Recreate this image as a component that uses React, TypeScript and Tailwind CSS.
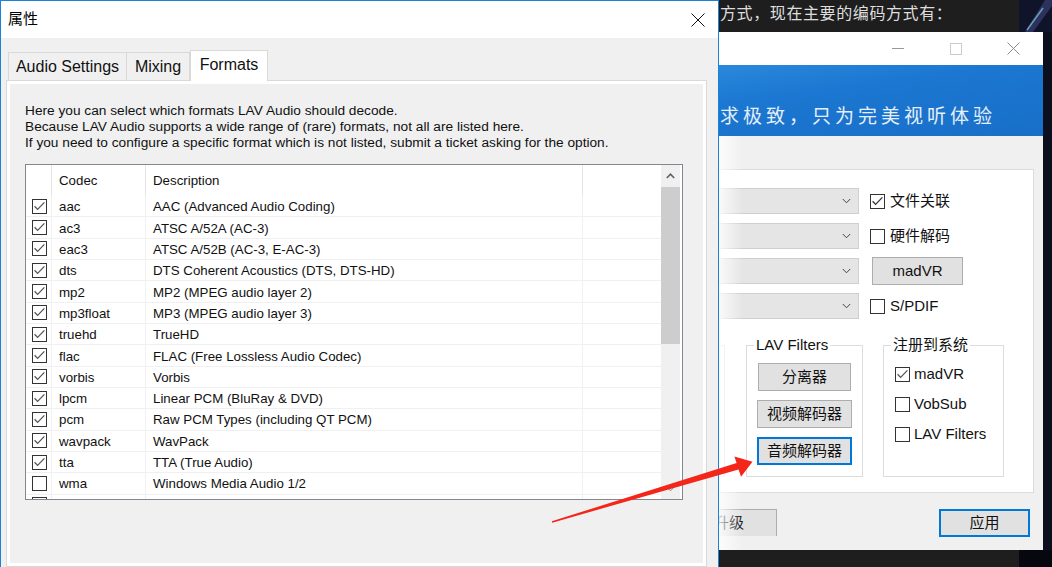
const formats: { codec: string; desc: string; on: boolean }[] = [
  { codec: 'aac', desc: 'AAC (Advanced Audio Coding)', on: true },
  { codec: 'ac3', desc: 'ATSC A/52A (AC-3)', on: true },
  { codec: 'eac3', desc: 'ATSC A/52B (AC-3, E-AC-3)', on: true },
  { codec: 'dts', desc: 'DTS Coherent Acoustics (DTS, DTS-HD)', on: true },
  { codec: 'mp2', desc: 'MP2 (MPEG audio layer 2)', on: true },
  { codec: 'mp3float', desc: 'MP3 (MPEG audio layer 3)', on: true },
  { codec: 'truehd', desc: 'TrueHD', on: true },
  { codec: 'flac', desc: 'FLAC (Free Lossless Audio Codec)', on: true },
  { codec: 'vorbis', desc: 'Vorbis', on: true },
  { codec: 'lpcm', desc: 'Linear PCM (BluRay & DVD)', on: true },
  { codec: 'pcm', desc: 'Raw PCM Types (including QT PCM)', on: true },
  { codec: 'wavpack', desc: 'WavPack', on: true },
  { codec: 'tta', desc: 'TTA (True Audio)', on: true },
  { codec: 'wma', desc: 'Windows Media Audio 1/2', on: false },
  // next row is scrolled out of view, only its checkbox edge shows
  { codec: '', desc: '', on: false },
]

function CheckBox({ on, stroke = '#555' }: { on: boolean; stroke?: string }) {
  return (
    <span className="flex h-[15px] w-[15px] shrink-0 items-center justify-center border border-[#333] bg-white">
      {on && (
        <svg width="13" height="13" viewBox="0 0 13 13">
          <polyline points="1.6,6.2 4.6,9.4 11.4,2.4" fill="none" stroke={stroke} strokeWidth="1.3" />
        </svg>
      )}
    </span>
  )
}

function Chevron({ up }: { up?: boolean }) {
  return (
    <svg width="9" height="6" viewBox="0 0 9 6">
      <polyline
        points={up ? '0.8,5 4.5,1.2 8.2,5' : '0.8,1 4.5,4.8 8.2,1'}
        fill="none"
        stroke={up ? '#606060' : '#444'}
        strokeWidth={up ? 1.6 : 1}
      />
    </svg>
  )
}

function FormatsPage() {
  return (
    <div className="h-full bg-[#f0f0f0] pl-[15px] pt-[19px]">
      {/* Intro */}
      <div className="text-[13.7px] leading-[16px] text-[#111]">
        <div>Here you can select which formats LAV Audio should decode.</div>
        <div>Because LAV Audio supports a wide range of (rare) formats, not all are listed here.</div>
        <div>If you need to configure a specific format which is not listed, submit a ticket asking for the option.</div>
      </div>

      {/* List view */}
      <div className="mt-[13px] flex h-[336px] w-[658px] border border-[#828790] bg-white text-[13.3px] text-[#111]">
        <div className="flex w-[635px] flex-col overflow-hidden">
          <div className="flex h-[31px] shrink-0">
            <div className="w-[26px] border-r border-[#e5e5e5]" />
            <div className="flex w-[94px] items-center border-r border-[#e5e5e5] pl-[7px] pt-px">Codec</div>
            <div className="flex w-[437px] items-center border-r border-[#e5e5e5] pl-[7px] pt-px">Description</div>
            <div className="w-[78px]" />
          </div>
          {formats.map((f, i) => (
            <div key={i} className="flex h-[21.33px] shrink-0 border-b border-[#f0f0f0]">
              <div className="flex w-[26px] items-center border-r border-[#f0f0f0] pl-[6px]">
                <CheckBox on={f.on} />
              </div>
              <div className="flex w-[94px] items-center border-r border-[#f0f0f0] pl-[7px] pt-[2px]">{f.codec}</div>
              <div className="flex w-[437px] items-center border-r border-[#f0f0f0] pl-[7px] pt-[2px]">{f.desc}</div>
              <div className="w-[78px]" />
            </div>
          ))}
        </div>

        {/* Scrollbar */}
        <div className="flex w-[19px] flex-col bg-[#f0f0f0]">
          <div className="flex h-[22px] items-center justify-center">
            <Chevron up />
          </div>
          <div className="h-[157px] bg-[#cdcdcd]" />
          <div className="flex-1" />
          <div className="flex h-[21px] items-center justify-center opacity-60">
            <Chevron />
          </div>
        </div>
        <div className="w-[2px] bg-white" />
      </div>
    </div>
  )
}

function PropertiesDialog() {
  return (
    <div className="relative z-10 flex h-full w-[719px] shrink-0 flex-col border-x border-t border-[#1883d7] bg-[#f0f0f0]">
      {/* Title bar */}
      <div className="flex h-[37px] items-center justify-between bg-white pl-[7px] pr-[13px]">
        <span className="text-[15px] text-black">属性</span>
        <svg width="14" height="14" viewBox="0 0 14 14">
          <path d="M0.5 0.5 L13.5 13.5 M13.5 0.5 L0.5 13.5" stroke="#111" strokeWidth="1" />
        </svg>
      </div>

      <div className="flex flex-1 flex-col pt-[12px]">
        {/* Tabs */}
        <div className="relative z-10 -mb-px flex items-end pl-[7px] text-[16px] text-[#111]">
          <div className="mb-px flex h-[28px] w-[119px] items-center justify-center border-x border-t border-[#d9d9d9]">
            Audio Settings
          </div>
          <div className="mb-px flex h-[28px] w-[63px] items-center justify-center border-r border-t border-[#d9d9d9]">
            Mixing
          </div>
          <div className="flex h-[31px] w-[78px] items-center justify-center border-x border-t border-[#d9d9d9] bg-white pb-[3px]">
            Formats
          </div>
        </div>

        {/* Tab page */}
        <div className="ml-[5px] w-[701px] flex-1 border border-[#d9d9d9] bg-white p-[3px]">
          <FormatsPage />
        </div>
      </div>
    </div>
  )
}

function WinButton({ children, className = '' }: { children: React.ReactNode; className?: string }) {
  return (
    <div className={`flex h-[28px] items-center justify-center bg-[#e1e1e1] text-[15px] text-[#111] ${className}`}>
      {children}
    </div>
  )
}

function PlayerWindow() {
  return (
    <div className="flex w-[324px] flex-col bg-[#f0f0f0]">
      {/* Caption */}
      <div className="flex h-[33px] justify-end bg-white">
        <div className="flex w-[58px] items-center justify-center">
          <div className="h-px w-[12px] bg-[#999]" />
        </div>
        <div className="flex w-[58px] items-center justify-center">
          <div className="h-[12px] w-[12px] border border-[#ccc]" />
        </div>
        <div className="flex w-[58px] items-center justify-center pr-[2px]">
          <svg width="13" height="13" viewBox="0 0 13 13">
            <path d="M0.5 0.5 L12.5 12.5 M12.5 0.5 L0.5 12.5" stroke="#8a8a8a" strokeWidth="1" />
          </svg>
        </div>
      </div>

      {/* Banner */}
      <div className="h-[71px] bg-[linear-gradient(172deg,#2a88dc_0%,#1b77d1_35%,#186fc8_100%)] pl-px pt-[38px]">
        <span className="text-[19px] leading-[28px] tracking-[4px] text-[#e6eff9]">求极致，只为完美视听体验</span>
      </div>

      {/* Body */}
      <div className="relative flex flex-1 flex-col pt-[33px]">
        <div className="mr-[9px] h-[324px] border-y border-r border-[#dcdcdc] bg-white text-[15px] text-[#111]">
          <div className="flex flex-col gap-[9px] pt-[18px]">
            {[
              { kind: 'check', label: '文件关联', on: true },
              { kind: 'check', label: '硬件解码', on: false },
              { kind: 'button', label: 'madVR', on: false },
              { kind: 'check', label: 'S/PDIF', on: false },
            ].map(r => (
              <div key={r.label} className="flex h-[26px] items-center">
                <div className="flex h-[26px] w-[140px] items-center justify-end border-y border-r border-[#cfcfcf] bg-[#e5e5e5] pr-[7px]">
                  <Chevron />
                </div>
                {r.kind === 'check' ? (
                  <div className="ml-[11px] flex items-center gap-[5px]">
                    <CheckBox on={r.on} stroke="#333" />
                    <span>{r.label}</span>
                  </div>
                ) : (
                  <WinButton className="ml-[13px] h-[27px] w-[91px] border border-[#adadad]">{r.label}</WinButton>
                )}
              </div>
            ))}
          </div>

          <div className="mt-[16px] flex items-start">
            <div className="mt-[10px] h-[132px] w-[6px] border-y border-r border-[#dcdcdc]" />

            <fieldset className="ml-[21px] h-[142px] w-[117px] border border-[#dcdcdc]">
              <legend className="ml-[7px] px-[2px] text-[15px] leading-[20px]">LAV Filters</legend>
              <div className="flex flex-col items-center gap-[9px] pt-[8px]">
                <WinButton className="w-[93px] border border-[#adadad]">分离器</WinButton>
                <WinButton className="w-[95px] border border-[#adadad]">视频解码器</WinButton>
                <WinButton className="w-[95px] border-2 border-[#0078d7]">音频解码器</WinButton>
              </div>
            </fieldset>

            <fieldset className="ml-[20px] h-[142px] w-[121px] border border-[#dcdcdc]">
              <legend className="ml-[7px] px-[2px] text-[15px] leading-[20px]">注册到系统</legend>
              <div className="flex flex-col pl-[11px] pt-[4px]">
                {[
                  { label: 'madVR', on: true },
                  { label: 'VobSub', on: false },
                  { label: 'LAV Filters', on: false },
                ].map(c => (
                  <div key={c.label} className="flex h-[30px] items-center gap-[4px]">
                    <CheckBox on={c.on} />
                    <span>{c.label}</span>
                  </div>
                ))}
              </div>
            </fieldset>
          </div>
        </div>

        {/* Footer buttons */}
        <div className="mt-[16px] flex items-start justify-between pr-[13px]">
          <div className="h-[27px] w-[58px] overflow-hidden">
            <WinButton className="-ml-[38px] h-[27px] w-[96px] border border-[#adadad]">升级</WinButton>
          </div>
          <WinButton className="h-[27px] w-[91px] border-2 border-[#0078d7]">应用</WinButton>
        </div>

        {/* fade from the dialog in front */}
        <div className="pointer-events-none absolute inset-y-0 left-0 w-[24px] bg-gradient-to-r from-white/80 to-transparent" />
      </div>
    </div>
  )
}

export default function App() {
  return (
    <div className="relative flex h-[567px] w-[1052px] overflow-hidden font-['Liberation_Sans','Noto_Sans_CJK_SC',sans-serif]">
      <PropertiesDialog />

      {/* Background: editor, player window, desktop */}
      <div className="flex flex-1 flex-col bg-[#0b0e19]">
        <div className="flex h-[32px]">
          <div className="w-[300px] bg-[#1e1e1e] pl-px pt-[3px] text-[16px] leading-[22px] tracking-[0.6px] text-[#dedede]">
            方式，现在主要的编码方式有：
          </div>
          <div className="flex-1 bg-[#10142a]">
            <svg width="33" height="32" viewBox="0 0 33 32">
              <polygon points="6,32 26,0 33,0 33,6 14,32" fill="#3a3f73" opacity="0.7" />
              <line x1="8" y1="30" x2="24" y2="8" stroke="#7fd0e0" strokeWidth="1.5" opacity="0.7" />
            </svg>
          </div>
        </div>
        <div className="flex h-[518px]">
          <PlayerWindow />
          <div className="flex-1 bg-[#0c0f1d]" />
        </div>
        <div className="flex flex-1">
          <div className="w-[300px] bg-[#1e1e1e]" />
          <div className="flex-1 bg-[#07080f]" />
        </div>
      </div>

      {/* Red annotation arrow */}
      <svg className="pointer-events-none absolute inset-0 z-20" width="1052" height="567" viewBox="0 0 1052 567">
        <polygon
          points="551.8,521.3 736.6,462.9 734.4,456.4 752.5,461.8 741,476.8 738.6,469.5 552.2,522.7"
          fill="#f4261a"
        />
      </svg>
    </div>
  )
}
